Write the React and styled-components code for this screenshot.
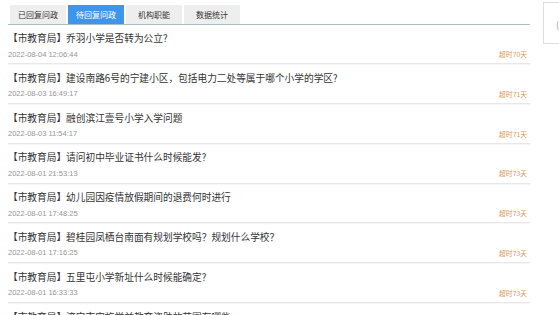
import styled, { createGlobalStyle } from "styled-components";

const GlobalStyle = createGlobalStyle`
    html, body {
        margin: 0;
        padding: 0;
        background: #ffffff;
        font-family: "Noto Sans CJK SC", "Noto Sans", sans-serif;
        overflow: hidden;
    }
`

const tabs = ["已回复问政", "待回复问政", "机构职能", "数据统计"];

const questions = [
    { title: "【市教育局】乔羽小学是否转为公立?", date: "2022-08-04 12:06:44", late: "超时70天" },
    { title: "【市教育局】建设南路6号的宁建小区，包括电力二处等属于哪个小学的学区?", date: "2022-08-03 16:49:17", late: "超时71天" },
    { title: "【市教育局】融创滨江壹号小学入学问题", date: "2022-08-03 11:54:17", late: "超时71天" },
    { title: "【市教育局】请问初中毕业证书什么时候能发?", date: "2022-08-01 21:53:13", late: "超时73天" },
    { title: "【市教育局】幼儿园因疫情放假期间的退费何时进行", date: "2022-08-01 17:48:25", late: "超时73天" },
    { title: "【市教育局】碧桂园凤栖台南面有规划学校吗？规划什么学校？", date: "2022-08-01 17:16:25", late: "超时73天" },
    { title: "【市教育局】五里屯小学新址什么时候能确定?", date: "2022-08-01 16:33:33", late: "超时73天" },
    { title: "【市教育局】济宁市实施学前教育资助的范围有哪些", date: "2022-08-01 15:20:41", late: "超时73天" },
];

export default function App() {
    return (
        <Page>
            <GlobalStyle />
            <Main>
                <TabBar>
                    {tabs.map((t, i) => (
                        <Tab key={t} active={i === 1}>{t}</Tab>
                    ))}
                </TabBar>
                <List>
                    {questions.map((q) => (
                        <Row key={q.date}>
                            <Title>{q.title}</Title>
                            <Meta>
                                <DateText>{q.date}</DateText>
                                <Late>{q.late}</Late>
                            </Meta>
                        </Row>
                    ))}
                </List>
            </Main>
            <SidePanel>
                <SideText>(</SideText>
            </SidePanel>
        </Page>
    );
}

const Page = styled.div`
    display: flex;
    align-items: flex-start;
    width: 559px;
    height: 315px;
    overflow: hidden;
    padding: 2px 0 0 8px;
    box-sizing: border-box;
    gap: 13px;
`
const Main = styled.div`
    display: flex;
    flex-direction: column;
    width: 522px;
    flex-shrink: 0;
    padding-top: 2.5px;
`
const TabBar = styled.div`
    display: flex;
    gap: 2px;
    padding-left: 2px;
    border-bottom: 1.5px solid #a4c2c2;
`
const Tab = styled.div`
    width: 56px;
    height: 19px;
    display: flex;
    align-items: center;
    justify-content: center;
    font-size: 8px;
    background: ${(p) => (p.active ? "#3d96ec" : "#eeeeee")};
    color: ${(p) => (p.active ? "#ffffff" : "#333333")};
`
const List = styled.div`
    display: flex;
    flex-direction: column;
`
const Row = styled.div`
    display: flex;
    flex-direction: column;
    padding: 7.5px 3px 4.3px 0;
    border-bottom: 1px solid #e8e8e8;
    box-shadow: 0 1px 1px rgba(0, 0, 0, 0.03);
`
const Title = styled.div`
    font-size: 9.7px;
    line-height: 12px;
    color: #333333;
    white-space: nowrap;
`
const Meta = styled.div`
    display: flex;
    justify-content: space-between;
    align-items: center;
    margin-top: 5px;
    height: 10px;
`
const DateText = styled.span`
    font-family: "Liberation Sans", Arial, sans-serif;
    font-size: 7.5px;
    color: #959595;
`
const Late = styled.span`
    font-size: 6.8px;
    color: #dc9a5c;
`
const SidePanel = styled.div`
    width: 40px;
    height: 42px;
    border: 1px solid #dddddd;
    box-sizing: border-box;
    flex-shrink: 0;
    padding: 6px 0 0 12px;
`
const SideText = styled.span`
    font-size: 9px;
    color: #999999;
`
